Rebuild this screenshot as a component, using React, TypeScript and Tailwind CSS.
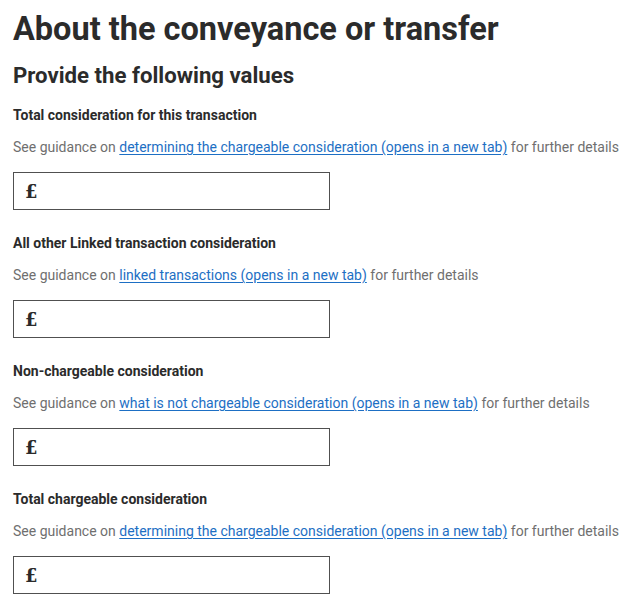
import React from 'react';

const fields = [
  { label: 'Total consideration for this transaction', link: 'determining the chargeable consideration (opens in a new tab)' },
  { label: 'All other Linked transaction consideration', link: 'linked transactions (opens in a new tab)' },
  { label: 'Non-chargeable consideration', link: 'what is not chargeable consideration (opens in a new tab)' },
  { label: 'Total chargeable consideration', link: 'determining the chargeable consideration (opens in a new tab)' },
];

function MoneyField({ label, link }: { label: string; link: string }) {
  return (
    <div className="mb-[24px]">
      <label className="block text-[14px] font-bold leading-[18px] text-[#2b2b2b]">{label}</label>
      <p className="mt-[13px] whitespace-nowrap text-[14px] leading-[20px] text-[#6f6f6f]">
        See guidance on{' '}
        <a href="#" className="text-[#1d6fc4] underline underline-offset-2">{link}</a>{' '}
        for further details
      </p>
      <div className="mt-[15px] flex h-[38px] w-[317px] items-center border border-[#505050] pl-[11px]">
        <span className="text-[18px] font-bold text-[#2b2b2b] [font-family:'DejaVu_Serif',serif]">£</span>
        <input className="ml-2 h-full min-w-0 flex-1 outline-none" />
      </div>
    </div>
  );
}

export default function App() {
  return (
    <div className="bg-white px-[13px] pt-[7px] [font-family:Roboto,'Liberation_Sans',sans-serif]">
      <h1 className="text-[32.5px] font-bold leading-[44px] text-[#2b2b2b]">About the conveyance or transfer</h1>
      <h2 className="mt-[9px] text-[22.2px] font-bold leading-[30px] text-[#2b2b2b]">Provide the following values</h2>
      <div className="mt-[16px]">
        {fields.map((f, i) => (
          <MoneyField key={i} label={f.label} link={f.link} />
        ))}
      </div>
    </div>
  );
}
